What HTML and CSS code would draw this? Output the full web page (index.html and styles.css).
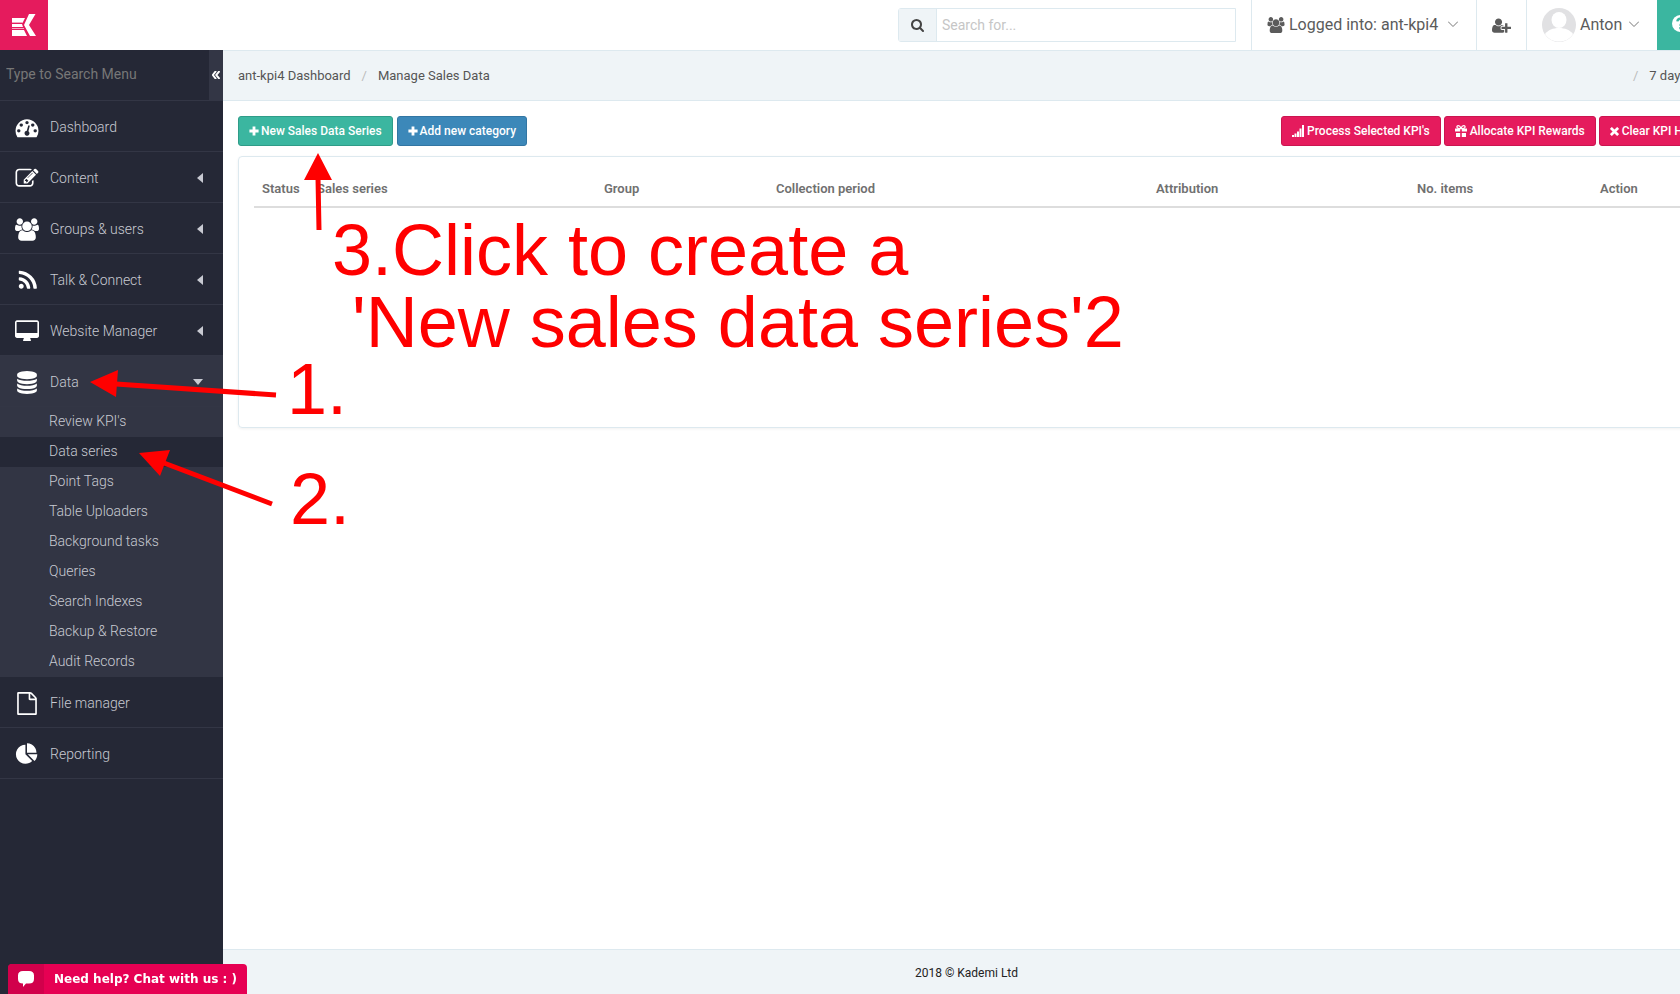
FILE: index.html
```html
<!DOCTYPE html>
<html lang="en">
<head>
<meta charset="utf-8">
<title>Manage Sales Data</title>
<link rel="stylesheet" href="styles.css">
</head>
<body>
<svg class="sprite" aria-hidden="true">
  <symbol id="i-users" viewBox="0 0 1920 1792"><path d="M593 896q-162 5-265 128h-134q-82 0-138-40.5t-56-118.5q0-353 124-353 6 0 43.5 21t97.5 42.5 119 21.5q67 0 133-23-5 37-5 66 0 139 81 256zm1071 637q0 120-73 189.5t-194 69.5h-874q-121 0-194-69.5t-73-189.5q0-53 3.5-103.5t14-109 26.5-108.5 43-97.5 62-81 85.5-53.5 111.5-20q10 0 43 21.5t73 48 107 48 135 21.5 135-21.5 107-48 73-48 43-21.5q61 0 111.5 20t85.5 53.5 62 81 43 97.5 26.5 108.5 14 109 3.5 103.5zm-1024-1277q0 106-75 181t-181 75-181-75-75-181 75-181 181-75 181 75 75 181zm704 384q0 159-112.5 271.5t-271.5 112.5-271.5-112.5-112.5-271.5 112.5-271.5 271.5-112.5 271.5 112.5 112.5 271.5zm576 225q0 78-56 118.5t-138 40.5h-134q-103-123-265-128 81-117 81-256 0-29-5-66 66 23 133 23 59 0 119-21.5t97.5-42.5 43.5-21q124 0 124 353zm-128-609q0 106-75 181t-181 75-181-75-75-181 75-181 181-75 181 75 75 181z"/></symbol>
  <symbol id="i-plus" viewBox="0 0 12 12"><path d="M4.300.5h3.400v3.800h3.800v3.400H7.700v3.800H4.300V7.700H.5V4.300h3.800z"/></symbol>
  <symbol id="i-left" viewBox="0 0 6 10"><path d="M6 0v10L0 5z"/></symbol>
</svg>

<div class="page">
  <header class="topbar">
    <a class="logo" href="#" aria-label="Kademi">
      <svg viewBox="0 0 24 22" width="24" height="22"><path fill="#fff" d="M0 4h13l-2 4H0zM0 10h10l1 3H0zM0 16h12l3 6H0zM17 0h6.500l-6.500 11 7 11h-6l-6-11z"/><path fill="#f4a6c0" d="M0 8h11v1H0zM0 14h12v1H0z"/></svg>
    </a>
    <form class="search">
      <button type="button" aria-label="Search"><svg viewBox="64 128 1664 1664" width="13" height="13"><path d="M1216 832q0-185-131.500-316.500t-316.500-131.500-316.500 131.500-131.500 316.500 131.500 316.500 316.500 131.500 316.500-131.500 131.500-316.500zm512 832q0 52-38 90t-90 38q-54 0-90-38l-343-342q-179 124-399 124-143 0-273.500-55.500t-225-150-150-225-55.500-273.500 55.500-273.500 150-225 225-150 273.500-55.500 273.500 55.500 225 150 150 225 55.500 273.500q0 220-124 399l343 343q37 37 37 90z"/></svg></button>
      <input type="text" placeholder="Search for..." aria-label="Search for">
    </form>
    <button class="top-item account" type="button"><svg width="18" height="16"><use href="#i-users"/></svg><span>Logged into: ant-kpi4</span><svg class="chev" viewBox="0 0 10 6" width="10" height="6"><path d="M0 .5l5 5 5-5"/></svg></button>
    <button class="top-item invite" type="button" aria-label="Add user"><svg viewBox="0 0 2048 1792" width="19" height="17"><path d="M704 896q-159 0-271.500-112.500t-112.500-271.500 112.500-271.500 271.500-112.500 271.500 112.500 112.500 271.500-112.500 271.500-271.500 112.500zm960 128h352q13 0 22.500 9.500t9.500 22.500v192q0 13-9.500 22.500t-22.500 9.500h-352v352q0 13-9.500 22.500t-22.500 9.500h-192q-13 0-22.500-9.500t-9.500-22.500v-352h-352q-13 0-22.500-9.500t-9.500-22.500v-192q0-13 9.500-22.500t22.500-9.500h352v-352q0-13 9.500-22.500t22.500-9.500h192q13 0 22.500 9.500t9.500 22.500v352zm-736 224q0 52 38 90t90 38h256v238q-68 50-171 50h-874q-121 0-194-69t-73-190q0-53 3.500-103.500t14-109 26.500-108.500 43-97.500 62-81 85.500-53.500 111.500-20q19 0 39 17 79 61 154.500 91.500t164.500 30.500 164.500-30.500 154.500-91.500q20-17 39-17 132 0 217 96h-223q-52 0-90 38t-38 90v192z"/></svg></button>
    <button class="top-item user" type="button"><svg class="avatar" viewBox="0 0 34 34" width="34" height="34"><circle cx="17" cy="17" r="17" fill="#e1e1e3"/><ellipse cx="17" cy="12" rx="7.500" ry="8" fill="#fff"/><path fill="#fff" d="M3 26c3-4 8-6 14-6s11 2 14 6c-3 5-8 7.500-14 7.500S6 31 3 26z"/></svg><span>Anton</span><svg class="chev" viewBox="0 0 10 6" width="10" height="6"><path d="M0 .5l5 5 5-5"/></svg></button>
    <button class="help" type="button" aria-label="Help"><svg viewBox="0 0 16 16" width="17" height="17"><circle cx="8" cy="8" r="8" fill="#fff"/><path fill="none" stroke="#3bb6a0" stroke-width="2.200" d="M5 6q.5-2.500 3-2.500 3 0 3 2.300 0 1.200-1.500 2T8 10.200M8 11.200v2.200"/></svg></button>
  </header>

  <div class="body">
    <aside class="sidebar">
      <div class="menu-search">
        <input type="text" placeholder="Type to Search Menu" aria-label="Type to Search Menu">
        <button type="button" aria-label="Collapse menu"><svg viewBox="0 0 8 8" width="8" height="8"><path d="M4 0L.8 4 4 8M7.500 0L4.300 4l3.200 4"/></svg></button>
      </div>
      <nav>
        <a class="item" href="#"><svg viewBox="0 0 1792 1792" width="24" height="23"><path d="M384 1152q0-53-37.500-90.500t-90.500-37.500-90.500 37.500-37.500 90.500 37.500 90.500 90.500 37.500 90.500-37.500 37.500-90.500zm192-448q0-53-37.500-90.500t-90.500-37.500-90.500 37.500-37.500 90.500 37.500 90.500 90.500 37.500 90.500-37.500 37.500-90.500zm428 481l101-382q6-26-7.500-48.500t-38.500-29.500-48 6.500-30 39.500l-101 382q-60 5-107 43.500t-63 98.500q-20 77 20 146t117 89 146-20 89-117q16-60-6-117t-72-91zm660-33q0-53-37.500-90.500t-90.500-37.500-90.500 37.500-37.500 90.500 37.500 90.500 90.500 37.500 90.500-37.500 37.500-90.500zm-640-640q0-53-37.500-90.500t-90.500-37.500-90.500 37.500-37.500 90.500 37.500 90.500 90.500 37.500 90.500-37.500 37.500-90.500zm448 192q0-53-37.500-90.500t-90.500-37.500-90.500 37.500-37.500 90.500 37.500 90.500 90.500 37.500 90.500-37.500 37.500-90.500zm320 448q0 261-141 483-19 29-54 29h-1402q-35 0-54-29-141-221-141-483 0-182 71-348t191-286 286-191 348-71 348 71 286 191 191 286 71 348z"/></svg><span>Dashboard</span></a>
        <a class="item" href="#"><svg viewBox="0 0 1792 1792" width="24" height="23"><path d="M888 1184l116-116-152-152-116 116v56h96v96h56zm440-720q-16-16-33 1l-350 350q-17 17-1 33t33-1l350-350q17-17 1-33zm80 594v190q0 119-84.500 203.500t-203.500 84.500h-832q-119 0-203.500-84.500t-84.500-203.500v-832q0-119 84.500-203.500t203.500-84.500h832q63 0 117 25 15 7 18 23 3 17-9 29l-49 49q-14 14-32 8-23-6-45-6h-832q-66 0-113 47t-47 113v832q0 66 47 113t113 47h832q66 0 113-47t47-113v-126q0-13 9-22l64-64q15-15 35-7t20 29zm-96-738l288 288-672 672h-288v-288zm444 132l-92 92-288-288 92-92q28-28 68-28t68 28l152 152q28 28 28 68t-28 68z"/></svg><span>Content</span><svg class="caret" width="6" height="10"><use href="#i-left"/></svg></a>
        <a class="item" href="#"><svg width="24" height="23"><use href="#i-users"/></svg><span>Groups &amp; users</span><svg class="caret" width="6" height="10"><use href="#i-left"/></svg></a>
        <a class="item" href="#"><svg viewBox="0 0 1664 1792" width="24" height="23"><path d="M576 1344q0 80-56 136t-136 56-136-56-56-136 56-136 136-56 136 56 56 136zm512 123q2 28-17 48-18 21-47 21h-135q-25 0-43-16.500t-20-41.500q-22-229-184.500-391.500t-391.500-184.500q-25-2-41.500-20t-16.500-43v-135q0-29 21-47 17-17 43-17h5q160 13 306 80.500t259 181.500q114 113 181.500 259t80.500 306zm512 2q2 27-18 47-18 20-46 20h-143q-26 0-44.500-17.500t-19.500-42.500q-12-215-101-408.500t-231.500-336-336-231.500-408.500-102q-25-1-42.500-19.500t-17.500-43.500v-143q0-28 20-46 18-18 44-18h3q262 13 501.500 120t425.500 294q187 186 294 425.500t120 501.500z"/></svg><span>Talk &amp; Connect</span><svg class="caret" width="6" height="10"><use href="#i-left"/></svg></a>
        <a class="item" href="#"><svg viewBox="-64 0 1920 1792" width="24" height="23"><path d="M1728 992v-832q0-13-9.500-22.500t-22.500-9.500h-1600q-13 0-22.500 9.500t-9.500 22.500v832q0 13 9.500 22.500t22.500 9.500h1600q13 0 22.500-9.500t9.500-22.500zm128-832v1088q0 66-47 113t-113 47h-544q0 37 16 77.500t32 71 16 43.500q0 26-19 45t-45 19h-512q-26 0-45-19t-19-45q0-14 16-44t32-70 16-78h-544q-66 0-113-47t-47-113v-1088q0-66 47-113t113-47h1600q66 0 113 47t47 113z"/></svg><span>Website Manager</span><svg class="caret" width="6" height="10"><use href="#i-left"/></svg></a>
        <div class="open">
          <a class="item" href="#"><svg viewBox="0 0 1792 1792" width="24" height="23"><path d="M896 768q237 0 443-43t325-127v170q0 69-103 128t-280 93.500-385 34.500-385-34.500-280-93.500-103-128v-170q119 84 325 127t443 43zm0 768q237 0 443-43t325-127v170q0 69-103 128t-280 93.500-385 34.500-385-34.500-280-93.500-103-128v-170q119 84 325 127t443 43zm0-384q237 0 443-43t325-127v170q0 69-103 128t-280 93.500-385 34.500-385-34.500-280-93.500-103-128v-170q119 84 325 127t443 43zm0-1152q208 0 385 34.500t280 93.500 103 128v128q0 69-103 128t-280 93.500-385 34.500-385-34.500-280-93.500-103-128v-128q0-69 103-128t280-93.500 385-34.500z"/></svg><span>Data</span><svg class="caret" viewBox="0 0 10 6" width="10" height="6"><path d="M0 0h10L5 6z"/></svg></a>
          <ul class="sub">
            <li><a href="#">Review KPI's</a></li>
            <li class="active"><a href="#">Data series</a></li>
            <li><a href="#">Point Tags</a></li>
            <li><a href="#">Table Uploaders</a></li>
            <li><a href="#">Background tasks</a></li>
            <li><a href="#">Queries</a></li>
            <li><a href="#">Search Indexes</a></li>
            <li><a href="#">Backup &amp; Restore</a></li>
            <li><a href="#">Audit Records</a></li>
          </ul>
        </div>
        <a class="item" href="#"><svg viewBox="0 0 1792 1792" width="24" height="23"><path d="M1596 380q28 28 48 76t20 88v1152q0 40-28 68t-68 28h-1344q-40 0-68-28t-28-68v-1600q0-40 28-68t68-28h896q40 0 88 20t76 48zm-444-244v376h376q-10-29-22-41l-313-313q-12-12-41-22zm384 1528v-1024h-416q-40 0-68-28t-28-68v-416h-768v1536h1280z"/></svg><span>File manager</span></a>
        <a class="item" href="#"><svg viewBox="0 -20 1792 1860" width="24" height="23"><path d="M768 890l546 546q-106 108-247.500 168t-298.500 60q-209 0-385.500-103t-279.500-279.500-103-385.500 103-385.500 279.500-279.500 385.500-103v762zm187 6h773q0 157-60 298.500t-168 247.500zm709-128h-768v-768q209 0 385.500 103t279.500 279.500 103 385.500z"/></svg><span>Reporting</span></a>
      </nav>
    </aside>

    <main class="main">
      <div class="crumbs">
        <a href="#">ant-kpi4 Dashboard</a><i>/</i><span>Manage Sales Data</span>
        <span class="range"><i>/</i><a href="#">7 days</a></span>
      </div>
      <div class="content">
        <div class="toolbar">
          <button class="btn green" type="button"><svg width="10" height="10"><use href="#i-plus"/></svg>New Sales Data Series</button>
          <button class="btn blue" type="button"><svg width="10" height="10"><use href="#i-plus"/></svg>Add new category</button>
          <div class="actions">
            <button class="btn pink" type="button"><svg viewBox="0 0 12 12" width="12" height="12"><path d="M0 10h2v2H0zM2.500 8.500h2V12h-2zM5 6.500h2V12H5zM7.500 3.500h2V12h-2zM10 0h2v12h-2z"/></svg>Process Selected KPI's</button>
            <button class="btn pink" type="button"><svg viewBox="0 0 12 12" width="12" height="12"><path d="M0 3.500h5.200V6.500H0zM6.800 3.500H12V6.500H6.800zM1 8h4.200v4H1zM6.800 8H11v4H6.800z"/><path fill="none" stroke="#fff" stroke-width="1.300" d="M6 3.500Q5 .7 3.300.7T2 2.300t4 1.200Q7 .7 8.700.7T10 2.300t-4 1.200"/></svg>Allocate KPI Rewards</button>
            <button class="btn pink" type="button"><svg viewBox="0 0 10 10" width="9" height="9"><path fill="none" stroke="#fff" stroke-width="3" d="M1 1l8 8M9 1L1 9"/></svg>Clear KPI History</button>
          </div>
        </div>
        <section class="panel">
          <table>
            <colgroup><col class="c1"><col class="c2"><col class="c3"><col class="c4"><col class="c5"><col class="c6"><col></colgroup>
            <thead><tr><th>Status</th><th>Sales series</th><th>Group</th><th>Collection period</th><th>Attribution</th><th>No. items</th><th>Action</th></tr></thead>
          </table>
        </section>
      </div>
      <footer>2018 © Kademi Ltd</footer>
    </main>
  </div>
</div>

<button class="chat" type="button"><span class="bubble"><svg viewBox="0 0 16 16" width="16" height="16"><path d="M5 0h6q5 0 5 4.500v3.500q0 4.500-5 4.500H8L5 16v-3.500Q0 12.500 0 8V4.500Q0 0 5 0z"/></svg></span><span class="chat-text">Need help? Chat with us : )</span></button>

<div class="notes">
  <svg width="400" height="520"><path d="M318 153l14 27H304zM90 382l28-12-2 27zM139 453l31-3-10 26z"/><path class="shaft" d="M318 178l1 52M116 384l160 11M164 463l108 41"/></svg>
  <span class="note n3">3.Click to create a</span>
  <span class="note n3b">'New sales data series'2</span>
  <span class="note n1">1.</span>
  <span class="note n2">2.</span>
</div>
</body>
</html>
```
FILE: styles.css
```css
* { box-sizing: border-box; }
html { overflow: hidden; height: 100%; }
body {
  margin: 0;
  height: 100%;
  overflow: hidden;
  font: 13px/20px Roboto, sans-serif;
  color: #555;
  background: #fff;
}
a { color: inherit; text-decoration: none; }
button { font: inherit; color: inherit; border: 0; padding: 0; background: none; cursor: pointer; }
input { font: inherit; border: 0; outline: 0; padding: 0; min-width: 0; }
svg { fill: currentColor; flex: none; }
.sprite { position: absolute; width: 0; height: 0; }

/* the page is a little wider than the window */
.page { width: calc(100% + 57px); min-height: 100vh; display: flex; flex-direction: column; }

.topbar { display: flex; height: 50px; }
.logo { width: 48px; background: #e51b5d; display: flex; align-items: center; justify-content: center; margin-right: auto; }
.search { display: flex; width: 338px; height: 34px; margin: 8px 15px 0 0; border: 1px solid #dde9ef; border-radius: 3px 0 0 3px; font-size: 14px; }
.search button { width: 38px; background: #eff4f7; border-right: 1px solid #dde9ef; display: flex; align-items: center; justify-content: center; color: #444; }
.search input { flex: 1; padding: 0 5px; background: #fff; }
.search input::placeholder { color: #c6c6c6; opacity: 1; }
.top-item { display: flex; align-items: center; border-left: 1px solid #dde9ef; font-size: 16px; color: #5b5b5b; }
.account { width: 225px; padding-left: 15px; gap: 4px; }
.invite { width: 50px; justify-content: center; }
.user { width: 130px; padding-left: 15px; gap: 4px; }
.chev { fill: none; stroke: #777; margin: 0 0 2px 3px; }
.account .chev { margin-left: 6px; }
.help { width: 80px; background: #3bb6a0; display: flex; align-items: center; padding-left: 15px; padding-bottom: 4px; margin-left: 1px; }

.body { flex: 1; display: flex; }
.sidebar { width: 223px; background: #252836; color: #c8cad2; font-size: 14px; flex: none; }
.menu-search { display: flex; height: 51px; border-bottom: 1px solid #333645; }
.menu-search input { flex: 1; padding: 0 6px 2px; background: transparent; color: #ccc; }
.menu-search input::placeholder { color: #777; opacity: 1; }
.menu-search button { width: 14px; background: #333645; display: flex; align-items: center; justify-content: center; }
.menu-search button svg { fill: none; stroke: #fff; stroke-width: 2; }
.item { display: flex; align-items: center; gap: 11px; height: 51px; padding: 2px 20px 0 15px; border-bottom: 1px solid #333645; font-weight: 300; }
.item > svg:first-child { color: #fff; }
.caret { margin-left: auto; color: #c8cad2; }
.open { background: #323544; }
.sub { list-style: none; margin: 0; padding: 0; font-weight: 300; }
.sub a { display: block; height: 30px; line-height: 28px; padding-left: 49px; }
.sub .active { background: #252836; }

.main { flex: 1; display: flex; flex-direction: column; min-width: 0; }
.crumbs { display: flex; align-items: center; height: 51px; padding: 0 50px 0 15px; background: #eff4f7; border: solid #dde9ef; border-width: 1px 0; }
.crumbs i { color: #bbb; padding: 0 11px; font-style: normal; }
.range { margin-left: auto; }
.content { flex: 1; padding: 15px; }
.toolbar { display: flex; gap: 4px; padding-right: 0; }
.actions { display: flex; gap: 3px; margin: 0 -2px 0 auto; }
.btn { display: flex; align-items: center; gap: 3px; height: 30px; padding: 0 10px; border: 1px solid; border-radius: 3px; color: #fff; font-size: 12px; font-weight: 500; white-space: nowrap; }
.green, .blue { gap: 2px; }
.green { background: #3bb6a0; border-color: #2f9c88; }
.blue { background: #3c88b9; border-color: #3276a3; }
.pink { background: #e51b5d; border-color: #cb1550; }
.panel { margin-top: 10px; min-height: 272px; padding: 15px; border: 1px solid #dde9ef; border-radius: 4px; box-shadow: 0 1px 3px rgba(0, 0, 0, .06); }
table { width: 100%; table-layout: fixed; border-collapse: collapse; }
th { text-align: left; padding: 7px 8px 7px; border-bottom: 2px solid #ddd; font-weight: 600; color: #707070; }
.c1 { width: 55px; }
.c2 { width: 287px; }
.c3 { width: 172px; }
.c4 { width: 380px; }
.c5 { width: 261px; }
.c6 { width: 183px; }
footer { height: 45px; display: flex; align-items: center; justify-content: center; padding: 2px 27px 0 0; background: #eff4f7; border-top: 1px solid #dde9ef; color: #222; font-size: 12px; }

.chat { position: fixed; left: 8px; bottom: 0; display: flex; height: 30px; background: #e60053; color: #fff; border-radius: 4px 4px 0 0; overflow: hidden; font: bold 12px "DejaVu Sans", sans-serif; align-items: stretch; }
.bubble { width: 36px; background: #d1004b; display: flex; align-items: center; justify-content: center; }
.chat-text { padding: 0 10px; line-height: 30px; }

/* red guide marks drawn over the screen */
.notes { position: absolute; left: 0; top: 0; color: #f00; pointer-events: none; }
.notes svg { display: block; }
.shaft { fill: none; stroke: #f00; stroke-width: 5; }
.note { position: absolute; font: 72px/72px "Liberation Sans", sans-serif; white-space: nowrap; }
.n3 { left: 332px; top: 214px; }
.n3b { left: 352px; top: 286px; }
.n1 { left: 287px; top: 353px; }
.n2 { left: 290px; top: 463px; }
```
